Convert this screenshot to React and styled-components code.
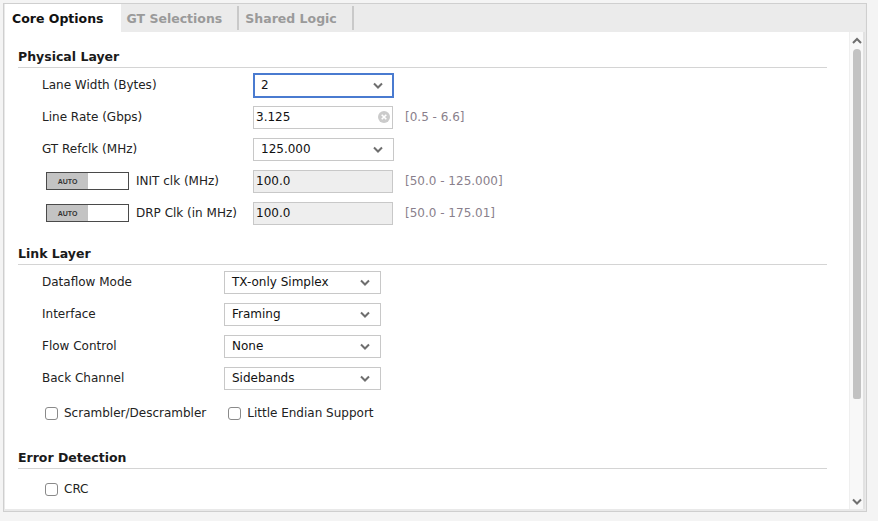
import React from "react";
import styled, { createGlobalStyle } from "styled-components";

const GlobalStyle = createGlobalStyle`
  html, body {
    margin: 0;
    padding: 0;
    background: #f4f4f4;
  }
  body {
    font-family: "DejaVu Sans", "Liberation Sans", sans-serif;
    font-size: 12px;
    color: #1a1a1a;
  }
`;

const TABS = ["Core Options", "GT Selections", "Shared Logic"];

const PHYSICAL = [
  { label: "Lane Width (Bytes)", kind: "select", value: "2", focused: true },
  { label: "Line Rate (Gbps)", kind: "clear", value: "3.125", range: "[0.5 - 6.6]" },
  { label: "GT Refclk (MHz)", kind: "select", value: "125.000" },
  { label: "INIT clk (MHz)", kind: "auto", value: "100.0", range: "[50.0 - 125.000]" },
  { label: "DRP Clk (in MHz)", kind: "auto", value: "100.0", range: "[50.0 - 175.01]" },
];

const LINK = [
  { label: "Dataflow Mode", value: "TX-only Simplex" },
  { label: "Interface", value: "Framing" },
  { label: "Flow Control", value: "None" },
  { label: "Back Channel", value: "Sidebands" },
];

const Chevron = ({ up }) => (
  <svg width="10" height="7" viewBox="0 0 10 7">
    <path
      d={up ? "M1 6 L5 2 L9 6" : "M1 1.5 L5 5.5 L9 1.5"}
      fill="none"
      stroke="#6e6e6e"
      strokeWidth="2"
    />
  </svg>
);

const ClearIcon = () => (
  <svg width="12" height="12" viewBox="0 0 12 12">
    <circle cx="6" cy="6" r="6" fill="#cbcbcb" />
    <path d="M3.7 3.7 L8.3 8.3 M8.3 3.7 L3.7 8.3" stroke="#fff" strokeWidth="1.6" />
  </svg>
);

const App = () => {
  return (
    <>
      <GlobalStyle />
      <Frame>
        <TabBar>
          {TABS.map((t, i) => (
            <Tab key={t} $active={i === 0}>
              {t}
            </Tab>
          ))}
        </TabBar>
        <Body>
          <Content>
            <Section $top={15}>
              <SectionTitle>Physical Layer</SectionTitle>
              <Rows>
                {PHYSICAL.map((row) => (
                  <PhysRow key={row.label}>
                    {row.kind === "auto" ? (
                      <AutoLabel>
                        <AutoToggle>
                          <AutoKnob>AUTO</AutoKnob>
                        </AutoToggle>
                        <span>{row.label}</span>
                      </AutoLabel>
                    ) : (
                      <Label>{row.label}</Label>
                    )}
                    {row.kind === "select" && (
                      <Select $width={141} $focused={row.focused}>
                        <span>{row.value}</span>
                        <Chevron />
                      </Select>
                    )}
                    {row.kind === "clear" && (
                      <TextBox>
                        <span>{row.value}</span>
                        <ClearIcon />
                      </TextBox>
                    )}
                    {row.kind === "auto" && <TextBox $disabled>{row.value}</TextBox>}
                    {row.range && <Range>{row.range}</Range>}
                  </PhysRow>
                ))}
              </Rows>
            </Section>

            <Section $top={15}>
              <SectionTitle>Link Layer</SectionTitle>
              <Rows>
                {LINK.map((row) => (
                  <LinkRow key={row.label}>
                    <Label>{row.label}</Label>
                    <Select $width={157}>
                      <span>{row.value}</span>
                      <Chevron />
                    </Select>
                  </LinkRow>
                ))}
                <CheckRow $top={3}>
                  <Check>
                    <Box />
                    Scrambler/Descrambler
                  </Check>
                  <Check>
                    <Box />
                    Little Endian Support
                  </Check>
                </CheckRow>
              </Rows>
            </Section>

            <Section $top={19}>
              <SectionTitle>Error Detection</SectionTitle>
              <Rows>
                <CheckRow $top={3}>
                  <Check>
                    <Box />
                    CRC
                  </Check>
                </CheckRow>
              </Rows>
            </Section>
          </Content>
          <ScrollBar>
            <ScrollArrow>
              <Chevron up />
            </ScrollArrow>
            <Track>
              <Thumb />
            </Track>
            <ScrollArrow>
              <Chevron />
            </ScrollArrow>
          </ScrollBar>
        </Body>
      </Frame>
    </>
  );
};

const Frame = styled.div`
  margin: 3px 0 0 3px;
  width: 864px;
  height: 509px;
  border: 1px solid #cfcfcf;
  background: #e9e9e9;
  display: flex;
  flex-direction: column;
  padding: 0 1px 2px 1px;
  box-sizing: border-box;
`;

const TabBar = styled.div`
  display: flex;
  height: 28px;
  flex-shrink: 0;
  background: #ebebeb;
`;

const Tab = styled.div`
  display: flex;
  align-items: center;
  padding: ${(p) => (p.$active ? "0 17px 0 7px" : "0 17px 0 6px")};
  font-weight: bold;
  font-size: 12.5px;
  color: ${(p) => (p.$active ? "#111" : "#9a9a9a")};
  background: ${(p) => (p.$active ? "#fff" : "transparent")};
  position: relative;

  &::after {
    content: "";
    display: ${(p) => (p.$active ? "none" : "block")};
    position: absolute;
    right: 0;
    top: 2px;
    bottom: 2px;
    width: 2px;
    background: #c9c9c9;
  }
`;

const Body = styled.div`
  flex: 1;
  display: flex;
  background: #fff;
  min-height: 0;
`;

const Content = styled.div`
  flex: 1;
  padding: 0 22px 0 13px;
`;

const Section = styled.div`
  margin-top: ${(p) => p.$top}px;
`;

const SectionTitle = styled.div`
  font-weight: bold;
  font-size: 12.5px;
  height: 20px;
  line-height: 20px;
  border-bottom: 1px solid #d4d4d4;
`;

const Rows = styled.div`
  padding-top: 1px;
  padding-left: 24px;
`;

const PhysRow = styled.div`
  display: grid;
  grid-template-columns: 211px 141px auto;
  align-items: center;
  height: 32px;
`;

const LinkRow = styled.div`
  display: grid;
  grid-template-columns: 182px 157px;
  align-items: center;
  height: 32px;
`;

const Label = styled.div`
  color: #222;
`;

const AutoLabel = styled.div`
  display: flex;
  align-items: center;
  gap: 7px;
  margin-left: 4px;
  color: #222;
`;

const AutoToggle = styled.div`
  width: 83px;
  height: 18px;
  border: 1px solid #4a4a4a;
  background: #fff;
  display: flex;
  box-sizing: border-box;
`;

const AutoKnob = styled.div`
  width: 41px;
  background: #c3c3c3;
  font-family: "Liberation Sans", Arial, sans-serif;
  font-size: 7px;
  font-weight: bold;
  color: #333;
  display: flex;
  align-items: center;
  justify-content: center;
`;

const Select = styled.div`
  width: ${(p) => p.$width}px;
  height: ${(p) => (p.$focused ? 25 : 23)}px;
  box-sizing: border-box;
  border: ${(p) => (p.$focused ? "2px solid #4a7bd0" : "1px solid #c8c8c8")};
  background: #fff;
  display: flex;
  align-items: center;
  justify-content: space-between;
  padding: 0 ${(p) => (p.$focused ? 9 : 10)}px 0 ${(p) => (p.$focused ? 6 : 7)}px;
  color: #111;
`;

const TextBox = styled.div`
  width: 140px;
  height: 23px;
  box-sizing: border-box;
  border: 1px solid #c8c8c8;
  background: ${(p) => (p.$disabled ? "#eeeeee" : "#fff")};
  display: flex;
  align-items: center;
  justify-content: space-between;
  padding: 0 2px 0 2px;
  color: #111;
`;

const Range = styled.div`
  color: #8a7f8c;
  margin-left: 11px;
`;

const CheckRow = styled.div`
  display: flex;
  align-items: center;
  gap: 22px;
  height: 32px;
  margin-top: ${(p) => p.$top}px;
  padding-left: 3px;
`;

const Check = styled.label`
  display: flex;
  align-items: center;
  gap: 6px;
  color: #222;
`;

const Box = styled.span`
  width: 13px;
  height: 13px;
  box-sizing: border-box;
  border: 1px solid #8a8a8a;
  border-radius: 3px;
  background: #fff;
`;

const ScrollBar = styled.div`
  width: 13px;
  background: #f8f8f8;
  border-left: 1px solid #efefef;
  border-right: 2px solid #e2e2e2;
  display: flex;
  flex-direction: column;
  align-items: center;
`;

const ScrollArrow = styled.div`
  height: 16px;
  display: flex;
  align-items: center;
  justify-content: center;
`;

const Track = styled.div`
  flex: 1;
  width: 100%;
  display: flex;
  justify-content: center;
  padding-top: 1px;
`;

const Thumb = styled.div`
  width: 8px;
  height: 350px;
  background: #c2c2c2;
  border-radius: 4px 4px 2px 2px;
`;

export default App;
